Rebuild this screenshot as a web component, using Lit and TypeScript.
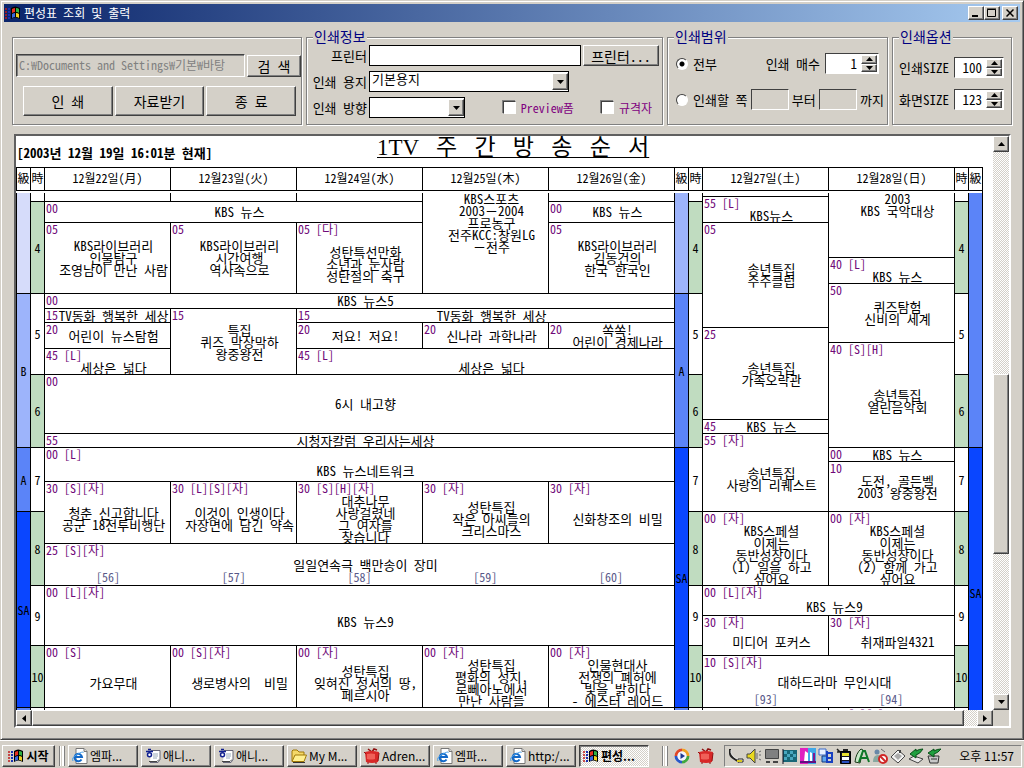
import { LitElement, html, css, svg, nothing } from "lit";
import { customElement, property } from "lit/decorators.js";
import { classMap } from "lit/directives/class-map.js";

interface Slot {
  from: number;
  to: number;
  col: number;
  span: number;
  kind: string;
  tag?: string;
  lines?: string[];
  episodes?: string[];
}

const slot = (from: number, to: number, col: number, span: number, tag: string, text: string, episodes?: string[]): Slot => ({
  from, to, col, span, kind: "show", tag, lines: text ? text.split("|") : [], episodes,
});
const band = (from: number, to: number, col: number, kind: string, text = ""): Slot => ({
  from, to, col, span: 1, kind, lines: text ? [text] : [],
});

// Slot boundaries down the sheet, in sheet units.
const MARKS = [0, 3, 8, 29, 64, 90, 100, 115, 129, 134, 149, 155, 181, 226, 240, 254, 268, 288, 318, 350, 392, 422, 452, 462, 514, 544];

const hours = (col: number): Slot[] => [
  band(0, 8, col, "hour"),
  band(8, 100, col, "hour even", "4"),
  band(100, 181, col, "hour", "5"),
  band(181, 254, col, "hour even", "6"),
  band(254, 318, col, "hour", "7"),
  band(318, 392, col, "hour even", "8"),
  band(392, 452, col, "hour", "9"),
  band(452, 514, col, "hour even", "10"),
  band(514, 544, col, "hour"),
];

const SLOTS: Slot[] = [
  band(0, 100, 0, "grade c"),
  band(100, 254, 0, "grade b", "B"),
  band(254, 318, 0, "grade a", "A"),
  band(318, 514, 0, "grade sa", "SA"),
  band(514, 544, 0, "grade a"),
  ...hours(1),

  slot(0, 8, 2, 1, "", ""),
  slot(0, 8, 3, 1, "", ""),
  slot(0, 8, 4, 1, "", ""),
  { ...slot(0, 100, 5, 1, "", "KBS스포츠|2003－2004|프로농구|전주KCC:창원LG|－전주"), kind: "show top" },
  slot(0, 8, 6, 1, "", ""),
  slot(8, 29, 2, 3, "00", "KBS 뉴스"),
  slot(8, 29, 6, 1, "00", "KBS 뉴스"),
  slot(29, 100, 2, 1, "05", "KBS라이브러리|인물탐구|조영남이 만난 사람"),
  slot(29, 100, 3, 1, "05", "KBS라이브러리|시간여행|역사속으로"),
  slot(29, 100, 4, 1, "05 [다]", "성탄특선만화|소년과 눈사람|성탄절의 축구"),
  slot(29, 100, 6, 1, "05", "KBS라이브러리|김동건의|한국 한국인"),
  slot(100, 115, 2, 5, "00", "KBS 뉴스5"),
  slot(115, 129, 2, 1, "15", "TV동화 행복한 세상"),
  slot(115, 181, 3, 1, "15", "특집|퀴즈 막상막하|왕중왕전"),
  slot(115, 129, 4, 3, "15", "TV동화 행복한 세상"),
  slot(129, 155, 2, 1, "20", "어린이 뉴스탐험"),
  slot(129, 155, 4, 1, "20", "저요! 저요!"),
  slot(129, 155, 5, 1, "20", "신나라 과학나라"),
  slot(129, 155, 6, 1, "20", "쏙쏙!|어린이 경제나라"),
  slot(155, 181, 2, 1, "45 [L]", "세상은 넓다"),
  slot(155, 181, 4, 3, "45 [L]", "세상은 넓다"),
  slot(181, 240, 2, 5, "00", "6시 내고향"),
  slot(240, 254, 2, 5, "55", "시청자칼럼 우리사는세상"),
  slot(254, 288, 2, 5, "00 [L]", "KBS 뉴스네트워크"),
  slot(288, 350, 2, 1, "30 [S][자]", "청춘 신고합니다|공군 18전투비행단"),
  slot(288, 350, 3, 1, "30 [L][S][자]", "이것이 인생이다|자장면에 담긴 약속"),
  slot(288, 350, 4, 1, "30 [S][H][자]", "대추나무|사랑걸렸네|그 여자를|찾습니다"),
  slot(288, 350, 5, 1, "30 [자]", "성탄특집|작은 아씨들의|크리스마스"),
  slot(288, 350, 6, 1, "30 [자]", "신화창조의 비밀"),
  slot(350, 392, 2, 5, "25 [S][자]", "일일연속극 백만송이 장미", ["[56]", "[57]", "[58]", "[59]", "[60]"]),
  slot(392, 452, 2, 5, "00 [L][자]", "KBS 뉴스9"),
  slot(452, 514, 2, 1, "00 [S]", "가요무대"),
  slot(452, 514, 3, 1, "00 [S][자]", "생로병사의  비밀"),
  slot(452, 514, 4, 1, "00 [자]", "성탄특집|잊혀진 성서의 땅,|페르시아"),
  slot(452, 514, 5, 1, "00 [자]", "성탄특집|평화의 성지,|로뻬아노에서|만난 사람들"),
  slot(452, 514, 6, 1, "00 [자]", "인물현대사|전쟁의 폐허에|빛을 밝히다|- 에스터 레어드"),
  slot(514, 544, 2, 5, "00", ""),

  band(0, 100, 7, "grade b"),
  band(100, 254, 7, "grade a", "A"),
  band(254, 514, 7, "grade sa", "SA"),
  band(514, 544, 7, "grade a"),
  ...hours(8),

  slot(0, 3, 9, 1, "", ""),
  slot(3, 29, 9, 1, "55 [L]", "KBS뉴스"),
  slot(29, 134, 9, 1, "05", "송년특집|주주클럽"),
  slot(134, 226, 9, 1, "25", "송년특집|가족오락관"),
  slot(226, 240, 9, 1, "45", "KBS 뉴스"),
  slot(240, 318, 9, 1, "55 [자]", "송년특집|사랑의 리퀘스트"),
  slot(318, 392, 9, 1, "00 [자]", "KBS스페셜|이제는|동반성장이다|(1) 일을 하고|싶어요"),
  { ...slot(0, 64, 10, 1, "", "2003|KBS 국악대상"), kind: "show top" },
  slot(64, 90, 10, 1, "40 [L]", "KBS 뉴스"),
  slot(90, 149, 10, 1, "50", "퀴즈탐험|신비의 세계"),
  slot(149, 254, 10, 1, "40 [S][H]", "송년특집|열린음악회"),
  slot(254, 268, 10, 1, "00", "KBS 뉴스"),
  slot(268, 318, 10, 1, "10", "도전, 골든벨|2003 왕중왕전"),
  slot(318, 392, 10, 1, "00 [자]", "KBS스페셜|이제는|동반성장이다|(2) 함께 가고|싶어요"),
  slot(392, 422, 9, 2, "00 [L][자]", "KBS 뉴스9"),
  slot(422, 462, 9, 1, "30 [자]", "미디어 포커스"),
  slot(422, 462, 10, 1, "30 [자]", "취재파일4321"),
  slot(462, 514, 9, 2, "10 [S][자]", "대하드라마 무인시대", ["[93]", "[94]"]),
  slot(514, 544, 9, 1, "00", ""),
  slot(514, 544, 10, 1, "00 [S][H]", ""),
  ...hours(11),
  band(0, 254, 12, "grade a"),
  band(254, 544, 12, "grade sa", "SA"),
];

const HEADS = ["級", "時", "12월22일(月)", "12월23일(火)", "12월24일(水)", "12월25일(木)", "12월26일(金)", "級", "時", "12월27일(土)", "12월28일(日)", "時", "級"];

const windowsLogo = svg`
  <path d="M0 4h2M0 7h2M0 10h2M0 13h2" stroke="#c01818" stroke-width="1.5"/>
  <path d="M3 4h2M3 7h2M3 10h2M3 13h2" stroke="#1830b0" stroke-width="2"/>
  <path d="M6 3q4-3 9 0v11q-5-3-9 0z" fill="#000"/>
  <path d="M7 4q2-1 3-1v4q-1 0-3 1z" fill="#e83020"/>
  <path d="M11 3q2 0 3 1v4q-1-1-3-1z" fill="#30b040"/>
  <path d="M7 9q2-1 3-1v4q-1 0-3 1z" fill="#3868e0"/>
  <path d="M11 8q2 0 3 1v4q-1-1-3-1z" fill="#f0d020"/>`;

const ICONS: Record<string, unknown> = {
  windows: windowsLogo,
  ie: svg`
    <path d="M4 .5h8l3 3v12H4z" fill="#fff" stroke="#777"/>
    <path d="M12 .5v3h3" fill="#ddd" stroke="#777"/>
    <path d="M9.500 11.500A3.700 3.700 0 1 1 10 9H3" fill="none" stroke="#1268c8" stroke-width="2"/>
    <path d="M1 13Q-1 10 5 6.500T11.500 4.500" fill="none" stroke="#48a0e8"/>`,
  hangul: svg`
    <path d="M6 2.500h9v9l-2 3H5" fill="#fff" stroke="#667"/>
    <path d="M8 6h5M8 8h5M8 10h4" stroke="#9ab"/>
    <path d="M3 1.500h3M1 3.500h7" stroke="#102090" stroke-width="1.500"/>
    <circle cx="4.500" cy="6.800" r="2" fill="#fff" stroke="#102090" stroke-width="1.500"/>
    <path d="M4 13.500h8l2-2" fill="none" stroke="#444"/>`,
  folder: svg`
    <path d="M1 13V3l1-1h4l2 2h5v3" fill="#f4d868" stroke="#a07808"/>
    <path d="M1 13.500L4 7h11.500L13 13.500z" fill="#fff090" stroke="#a07808"/>
    <path d="M2 14.500h12" stroke="#333"/>`,
  tv: svg`
    <path d="M4 1l4 3 2-3 3 1" fill="none" stroke="#901010" stroke-width="1.500"/>
    <path d="M1 4q7-2 14 0l-1 10q-6 2-12 0z" fill="#d82828"/>
    <path d="M3 6q4-1 8 0v5q-4 1-8 0z" fill="#f06058"/>
    <path d="M0 4l2 2M15 5l-1 8M3 15h2M11 15h2" stroke="#901010"/>`,
  player: svg`
    <circle cx="8" cy="8" r="7.500" fill="#e8e8f0"/>
    <path d="M8 2a6 6 0 0 1 6 6" fill="none" stroke="#f0a020" stroke-width="3"/>
    <path d="M14 8a6 6 0 0 1-6 6" fill="none" stroke="#40a840" stroke-width="3"/>
    <path d="M8 14a6 6 0 0 1-6-6" fill="none" stroke="#2858c8" stroke-width="3"/>
    <path d="M2 8a6 6 0 0 1 6-6" fill="none" stroke="#e04828" stroke-width="3"/>
    <circle cx="8" cy="8" r="4.500" fill="#f4f6ff"/>
    <path d="M6.500 5v6L11 8z" fill="#203890"/>`,
  phone: svg`
    <path d="M2 1v4q0 3 3 5l6 4" fill="none" stroke="#222" stroke-width="2"/>
    <path d="M3 2v3l3 4 5 3" fill="none" stroke="#ddd"/>
    <path d="M10 11h5v3h-5z" fill="#fff" stroke="#222"/>
    <path d="M9 13h5" stroke="#d8c820" stroke-width="2"/>`,
  speaker: svg`
    <path d="M1 6h3l5-5v14L4 10H1z" fill="#e8d820" stroke="#444"/>
    <path d="M11 5v6M13 7h2M13 4l2-1M13 11l2 1" stroke="#666"/>`,
  monitor: svg`
    <path d="M1.500 1.500h13v9h-13z" fill="#808080" stroke="#444"/>
    <path d="M2 14h4M9 14h5" stroke="#444" stroke-width="2"/>`,
  checker: svg`
    <path d="M1 2h14v12H1z" fill="#186878"/>
    <path d="M2 3h3v3H2zM8 3h3v3H8zM5 6h3v3H5zM11 6h3v3h-3zM2 9h3v3H2zM8 9h3v3H8z" fill="#48a8c0"/>
    <path d="M1 1v15" stroke="#112"/>`,
  messenger: svg`
    <path d="M0 0h8v16H0z" fill="#e020c0"/>
    <path d="M8 0h8v16H8z" fill="#40a8e8"/>
    <path d="M5 3l3 2v9H4z" fill="#fff"/>
    <path d="M10 4l2 1v9h-2z" fill="#fff"/>
    <path d="M14 5v9" stroke="#801890" stroke-width="2"/>
    <path d="M0 14h16" stroke="#601080" stroke-width="2"/>`,
  bluetool: svg`
    <path d="M1 1h7v6H1z" fill="#e8f0ff" stroke="#3868c8"/>
    <path d="M4 8h5v6H4z" fill="#60a8f0" stroke="#103880"/>
    <path d="M9 3v11h5v-4H9M14 9V5H9" fill="none" stroke="#1840c0" stroke-width="2"/>`,
  battery: svg`
    <path d="M1 1l3 3M1 4h4" stroke="#222" stroke-width="1.500"/>
    <path d="M4.500 3.500h10v12h-10z" fill="#112" stroke="#000"/>
    <path d="M6 5h7v3H6z" fill="#e8e030"/>
    <path d="M6 9h7v3H6z" fill="#fff"/>
    <path d="M6 13h7v2H6z" fill="#2850c0"/>
    <path d="M7 2h5" stroke="#222" stroke-width="2"/>`,
  letter: svg`
    <path d="M1 14Q2 5 7 1l2 1-3 13z" fill="#c8e8c8" stroke="#183818"/>
    <path d="M5 14L9 3h2l4 11M7 10h6" fill="none" stroke="#107828" stroke-width="2"/>`,
  blocked: svg`
    <circle cx="5" cy="4" r="2.500" fill="#6888a8"/>
    <path d="M1 14q0-7 5-7t4 7z" fill="#88a8a0"/>
    <circle cx="11" cy="11" r="4" fill="#fff" stroke="#d02828" stroke-width="2"/>
    <path d="M8 8l6 6" stroke="#d02828" stroke-width="2"/>
    <path d="M9 1l4 3" stroke="#666"/>`,
  house: svg`
    <path d="M1 9l7-7 7 6-7 7z" fill="#f4f4f4" stroke="#444"/>
    <path d="M4 8l4-3 4 3-4 4z" fill="#aaa"/>
    <path d="M10 2v3" stroke="#444" stroke-width="2"/>`,
  eject: svg`
    <path d="M1 11l5-3 9 3-5 4z" fill="#e8e8e8" stroke="#444"/>
    <path d="M15 1Q11 1 8 3V1L2 6l6 4V7q4-1 7-6z" fill="#20a040" stroke="#085018"/>`,
  drive: svg`
    <path d="M2 8h11l-1 7H4z" fill="#c8c8c8" stroke="#333"/>
    <path d="M5 11h6" stroke="#333"/>
    <path d="M15 1Q11 1 8 3V1L2 5l6 4V6q4-1 7-5z" fill="#20a040" stroke="#085018"/>`,
};

const icon = (name: string) => html`<svg class="icon" viewBox="0 0 16 16" width="16" height="16" aria-hidden="true">${ICONS[name]}</svg>`;
const arrow = (dir: string) => {
  const shapes: Record<string, string> = {
    up: "M0 4h7L3.500 0z",
    down: "M0 0h7L3.500 4z",
    left: "M4 0v7L0 3.500z",
    right: "M0 0v7L4 3.500z",
  };
  const tall = dir === "left" || dir === "right";
  return html`<svg width=${tall ? 4 : 7} height=${tall ? 7 : 4} aria-hidden="true"><path d=${shapes[dir]} /></svg>`;
};

const base = css`
  * { box-sizing: border-box; }
  button, input, select {
    font: inherit;
    color: #000;
    margin: 0;
    padding: 0;
    border-radius: 0;
  }
  svg { display: block; flex: none; }
  .raised {
    display: flex;
    align-items: center;
    justify-content: center;
    background: #d4d0c8;
    border: 1px solid;
    border-color: #fff #404040 #404040 #fff;
    box-shadow: inset -1px -1px #808080;
    white-space: pre;
  }
`;

@customElement("week-sheet")
export class WeekSheet extends LitElement {
  static styles = [base, css`
    :host {
      display: block;
      overflow: hidden;
      background: #fff;
      min-width: 0;
    }
    .page { padding-right: 10px; }
    .heading {
      display: grid;
      grid-template-columns: 28fr 47fr;
      height: 31px;
    }
    .stamp {
      margin: 0;
      padding: 10px 0 0 1px;
      font-size: 13px;
      line-height: 14px;
      font-weight: 700;
      white-space: nowrap;
    }
    .title {
      margin: 0;
      font: 400 23px/24px "Liberation Serif", "Noto Sans CJK KR", serif;
      text-decoration: underline;
      text-decoration-thickness: 1px;
      text-underline-offset: 2px;
      white-space: pre;
    }
    table {
      width: 100%;
      table-layout: fixed;
      border-collapse: separate;
      border-spacing: 0;
      border-right: 1px solid #000;
    }
    .narrow { width: 14px; }
    th, td {
      padding: 0;
      text-align: center;
      font-weight: 400;
      border-left: 1px solid #000;
      border-top: 1px solid #000;
      line-height: 12px;
      white-space: pre;
    }
    th {
      height: 24px;
      padding-bottom: 2px;
      border-bottom: 1px solid #000;
    }
    .gap td {
      height: 2px;
      border: 0;
      line-height: 0;
      background: #fff;
    }
    td { position: relative; vertical-align: middle; }
    .first td { border-top: 0; }
    .show { padding-left: 12px; font-size: 13px; }
    .tagged { padding-top: 12px; }
    .serial { padding-bottom: 12px; }
    .top { vertical-align: top; }
    .even { background: #c0dcc0; }
    .c { background: #d6dcfa; }
    .b { background: #9db4fb; }
    .a { background: #5b84f8; }
    .sa { background: #0a46ff; }
    .tag {
      position: absolute;
      left: 1px;
      top: 0;
      color: #700878;
      font-size: 12px;
    }
    .episodes {
      position: absolute;
      left: 0;
      right: 0;
      bottom: 2px;
      display: grid;
      grid-auto-flow: column;
      grid-auto-columns: 1fr;
      font-size: 12px;
      color: #585888;
    }
  `];

  private cell(s: Slot) {
    const kinds = Object.fromEntries(s.kind.split(" ").map((k) => [k, true]));
    return html`<td
      class=${classMap({ ...kinds, tagged: !!s.tag && s.tag.includes("["), serial: !!s.episodes })}
      colspan=${s.span}
      rowspan=${MARKS.indexOf(s.to) - MARKS.indexOf(s.from)}
    >${s.tag ? html`<span class="tag">${s.tag}</span>` : nothing}${(s.lines ?? []).map((l) => html`<div>${l}</div>`)}${s.episodes
        ? html`<div class="episodes">${s.episodes.map((e) => html`<span>${e}</span>`)}</div>`
        : nothing}</td>`;
  }

  render() {
    return html`<div class="page">
      <header class="heading">
        <p class="stamp">[2003년 12월 19일 16:01분 현재]</p>
        <h1 class="title">1TV   주   간   방   송   순   서</h1>
      </header>
      <table>
        <colgroup>${HEADS.map((h) => html`<col class=${h.length === 1 ? "narrow" : "day"} />`)}</colgroup>
        <thead>
          <tr>${HEADS.map((h) => html`<th scope="col">${h}</th>`)}</tr>
          <tr class="gap"><td colspan="13"></td></tr>
        </thead>
        <tbody>
          ${MARKS.slice(0, -1).map((m, i) => html`<tr class=${i === 0 ? "first" : "row"} style="height:${MARKS[i + 1] - m}px">${SLOTS.filter((s) => s.from === m)
            .sort((x, y) => x.col - y.col)
            .map((s) => this.cell(s))}</tr>`)}
        </tbody>
      </table>
    </div>`;
  }
}

@customElement("spin-box")
export class SpinBox extends LitElement {
  @property() value = "";
  @property() label = "";

  static styles = [base, css`
    :host { display: inline-block; }
    .spin {
      display: flex;
      height: 21px;
      padding: 1px;
      background: #fff;
      border: 1px solid;
      border-color: #404040 #fff #fff #404040;
    }
    input {
      flex: 1;
      width: 0;
      border: 0;
      background: none;
      outline: 0;
      text-align: right;
      padding-right: 4px;
    }
    .steps {
      display: grid;
      grid-template-rows: 1fr 1fr;
      width: 16px;
    }
    .steps button { min-height: 0; overflow: hidden; }
  `];

  render() {
    return html`<div class="spin">
      <input type="text" inputmode="numeric" aria-label=${this.label} .value=${this.value} />
      <span class="steps">
        <button class="raised" aria-label="증가">${arrow("up")}</button>
        <button class="raised" aria-label="감소">${arrow("down")}</button>
      </span>
    </div>`;
  }
}

@customElement("app-root")
export class AppRoot extends LitElement {
  static styles = [base, css`
    :host {
      display: flex;
      flex-direction: column;
      height: 100vh;
      overflow: hidden;
      background: #d4d0c8;
      color: #000;
      font: 12px/14px "Noto Sans Mono CJK KR", "Noto Sans CJK KR", sans-serif;
    }
    .window {
      flex: 1;
      min-height: 0;
      display: flex;
      flex-direction: column;
      padding: 2px;
      border: 1px solid;
      border-color: #d4d0c8 #404040 #404040 #d4d0c8;
      box-shadow: inset 1px 1px #fff, inset -1px -1px #808080;
    }
    .titlebar {
      display: flex;
      align-items: center;
      gap: 3px;
      height: 18px;
      margin: 1px;
      padding: 0 2px 0 1px;
      background: linear-gradient(90deg, #0a246a, #a6caf0);
      color: #fff;
    }
    .titlebar h1 {
      flex: 1;
      margin: 0;
      font-size: 12px;
      line-height: 16px;
      font-weight: 400;
    }
    .controls { display: flex; }
    .controls button { width: 16px; height: 14px; }
    .controls .close { margin-left: 2px; }

    .groups {
      display: grid;
      grid-template-columns: 291fr 358fr 222fr 121fr;
      gap: 3px;
      margin: 5px 8px 0 9px;
      font-size: 13px;
    }
    fieldset {
      position: relative;
      min-width: 0;
      height: 98px;
      margin: 0;
      padding: 0;
      border: 0;
    }
    fieldset::before {
      content: "";
      position: absolute;
      inset: 9px 1px 1px 0;
      border: 1px solid #808080;
      box-shadow: 1px 1px #fff, inset 1px 1px #fff;
    }
    legend {
      position: relative;
      float: left;
      width: auto;
      margin-left: 7px;
      padding: 0 1px;
      background: #d4d0c8;
      color: #000080;
      font-size: 14px;
      line-height: 17px;
    }
    .body {
      position: relative;
      clear: both;
      display: flex;
      flex-direction: column;
    }
    .line {
      display: flex;
      align-items: center;
      white-space: nowrap;
    }
    .files { padding: 26px 2px 0 4px; gap: 9px; }
    .files .line { gap: 2px; }
    .path {
      flex: 1;
      min-width: 0;
      height: 23px;
      padding: 0 2px 3px;
      background: #d4d0c8;
      border: 1px solid;
      border-color: #404040 #fff #fff #404040;
      box-shadow: inset 1px 1px #808080;
      font-size: 12px;
    }
    .path:disabled { color: #808080; }
    .search { width: 54px; height: 22px; font-size: 14px; }
    .actions { padding: 0 5px 0 7px; }
    .actions button { flex: 1; height: 30px; font-size: 14px; }

    .printer { gap: 5px; padding: 0 5px 0 3px; }
    .printer .line { height: 21px; }
    .cap { width: 58px; margin-right: 2px; text-align: right; }
    .printer .text {
      flex: 1;
      min-width: 0;
      height: 21px;
      background: #fff;
      border: 1px solid #000;
    }
    .printer .more { width: 76px; height: 21px; margin-left: 2px; font-size: 14px; }
    .combo { position: relative; display: block; }
    .combo select {
      appearance: none;
      width: 100%;
      height: 21px;
      padding: 0 18px 5px 2px;
      background: #fff;
      border: 1px solid #000;
      display: block;
      line-height: 14px;
    }
    .combo .raised {
      position: absolute;
      right: 1px;
      top: 2px;
      width: 16px;
      height: 17px;
      pointer-events: none;
    }
    .paper { width: 200px; }
    .way { width: 96px; }
    .check {
      display: flex;
      align-items: center;
      gap: 5px;
      color: #800080;
      font-size: 12px;
    }
    .check input {
      appearance: none;
      width: 13px;
      height: 13px;
      background: #fff;
      border: 1px solid;
      border-color: #404040 #fff #fff #404040;
      box-shadow: -1px -1px #808080;
    }
    .spread { flex: 1; display: flex; justify-content: flex-end; gap: 27px; padding-right: 7px; }

    .range { gap: 15px; padding: 8px 5px 0 9px; }
    .range .line { height: 21px; justify-content: space-between; }
    .radio { display: flex; align-items: center; gap: 5px; }
    .radio input {
      appearance: none;
      width: 12px;
      height: 12px;
      border-radius: 50%;
      border: 1px solid;
      border-color: #404040 #fff #fff #404040;
      background: #fff;
    }
    .radio input:checked { background: radial-gradient(circle, #000 2px, #fff 3px); }
    .copies { display: flex; align-items: center; gap: 5px; padding-right: 5px; }
    .copies spin-box { width: 54px; }
    .pages { width: 38px; height: 21px; background: #d4d0c8; border: 1px solid; border-color: #404040 #fff #fff #404040; }

    .option { gap: 11px; padding: 12px 9px 0 7px; }
    .option .line { justify-content: space-between; }
    .option spin-box { width: 50px; }

    .viewer {
      flex: 1;
      min-height: 0;
      display: grid;
      grid-template-columns: minmax(0, 1fr) 16px;
      grid-template-rows: minmax(0, 1fr) 16px;
      margin: 8px 10px 9px 11px;
      border: 2px solid;
      border-color: #606060 #fff #fff #606060;
    }
    .vbar, .hbar {
      display: flex;
      background: conic-gradient(#fff 25%, #d4d0c8 0 50%, #fff 0 75%, #d4d0c8 0) 0 0 / 2px 2px;
    }
    .vbar { flex-direction: column; }
    .vbar .end { height: 16px; }
    .hbar .end { width: 16px; }
    .before { flex: 223; }
    .vthumb { flex: 178; }
    .after { flex: 141; }
    .hthumb { flex: 932; }
    .rest { flex: 13; }

    .taskbar {
      display: flex;
      align-items: center;
      height: 28px;
      gap: 3px;
      padding: 2px 2px 0;
      border-top: 1px solid #fff;
      font-family: "Noto Sans CJK KR", sans-serif;
    }
    .taskbar .raised { height: 22px; }
    .start { width: 53px; gap: 2px; font-weight: 700; }
    .grip {
      width: 5px;
      height: 20px;
      margin: 0 1px;
      border-left: 1px solid #808080;
      border-right: 2px solid #fff;
      box-shadow: 1px 0 #808080, inset 1px 0 #fff;
    }
    .tasks { display: flex; flex: 1; gap: 3px; min-width: 0; }
    .tasks .raised {
      flex: 0 1 70px;
      min-width: 0;
      justify-content: flex-start;
      gap: 2px;
      padding-left: 3px;
      overflow: hidden;
    }
    .tasks .active {
      border-color: #404040 #fff #fff #404040;
      box-shadow: inset 1px 1px #808080;
      background: conic-gradient(#fff 25%, #d4d0c8 0 50%, #fff 0 75%, #d4d0c8 0) 0 0 / 2px 2px;
      font-weight: 700;
    }
    .quick { display: flex; gap: 8px; padding: 0 7px 0 3px; }
    .tray {
      display: flex;
      align-items: center;
      gap: 2px;
      height: 22px;
      padding: 0 7px 0 3px;
      border: 1px solid;
      border-color: #808080 #fff #fff #808080;
      white-space: nowrap;
    }
    .tray time { margin-left: 15px; }
  `];

  render() {
    const tasks = [
      ["ie", "엠파..."], ["hangul", "애니..."], ["hangul", "애니..."], ["folder", "My M..."],
      ["tv", "Adren..."], ["ie", "엠파..."], ["ie", "http:/..."], ["windows", "편성..."],
    ];
    const tray = ["phone", "speaker", "monitor", "checker", "messenger", "bluetool", "battery", "letter", "blocked", "house", "eject", "drive"];
    return html`
      <div class="window">
        <header class="titlebar">
          ${icon("windows")}
          <h1>편성표 조회 및 출력</h1>
          <span class="controls">
            <button class="raised" aria-label="최소화"><svg width="10" height="10"><path d="M1 8h6" stroke="#000" stroke-width="2" /></svg></button>
            <button class="raised" aria-label="최대화"><svg width="10" height="10"><path d="M.5 1.500h8v7h-8zM0 1h9" fill="none" stroke="#000" /></svg></button>
            <button class="raised close" aria-label="닫기"><svg width="8" height="8"><path d="M.5.5l7 7M7.500.5l-7 7" stroke="#000" stroke-width="1.500" /></svg></button>
          </span>
        </header>

        <div class="groups">
          <fieldset>
            <div class="body files">
              <div class="line">
                <input class="path" aria-label="경로" disabled .value=${"C:₩Documents and Settings₩기본₩바탕"} />
                <button class="raised search">검 색</button>
              </div>
              <div class="line actions">
                <button class="raised">인 쇄</button>
                <button class="raised">자료받기</button>
                <button class="raised">종 료</button>
              </div>
            </div>
          </fieldset>

          <fieldset>
            <legend>인쇄정보</legend>
            <div class="body printer">
              <div class="line">
                <label class="cap" for="printer">프린터</label>
                <input class="text" id="printer" type="text" />
                <button class="raised more">프린터...</button>
              </div>
              <div class="line">
                <label class="cap" for="paper">인쇄 용지</label>
                <span class="combo paper"><select id="paper"><option>기본용지</option></select><span class="raised">${arrow("down")}</span></span>
              </div>
              <div class="line">
                <label class="cap" for="way">인쇄 방향</label>
                <span class="combo way"><select id="way"><option></option></select><span class="raised">${arrow("down")}</span></span>
                <span class="spread">
                  <label class="check"><input type="checkbox" />Preview폼</label>
                  <label class="check"><input type="checkbox" />규격자</label>
                </span>
              </div>
            </div>
          </fieldset>

          <fieldset>
            <legend>인쇄범위</legend>
            <div class="body range">
              <div class="line">
                <label class="radio"><input type="radio" name="range" checked />전부</label>
                <span class="copies">인쇄 매수<spin-box value="1" label="인쇄 매수"></spin-box></span>
              </div>
              <div class="line">
                <label class="radio"><input type="radio" name="range" />인쇄할 쪽</label>
                <input class="pages" id="from" type="text" disabled />
                <label for="from">부터</label>
                <input class="pages" id="to" type="text" disabled />
                <label for="to">까지</label>
              </div>
            </div>
          </fieldset>

          <fieldset>
            <legend>인쇄옵션</legend>
            <div class="body option">
              <div class="line">인쇄SIZE<spin-box value="100" label="인쇄SIZE"></spin-box></div>
              <div class="line">화면SIZE<spin-box value="123" label="화면SIZE"></spin-box></div>
            </div>
          </fieldset>
        </div>

        <main class="viewer">
          <week-sheet></week-sheet>
          <div class="vbar">
            <button class="raised end" aria-label="위로">${arrow("up")}</button>
            <span class="before"></span><span class="raised vthumb"></span><span class="after"></span>
            <button class="raised end" aria-label="아래로">${arrow("down")}</button>
          </div>
          <div class="hbar">
            <button class="raised end" aria-label="왼쪽">${arrow("left")}</button>
            <span class="raised hthumb"></span><span class="rest"></span>
            <button class="raised end" aria-label="오른쪽">${arrow("right")}</button>
          </div>
        </main>
      </div>

      <footer class="taskbar">
        <button class="raised start">${icon("windows")}시작</button>
        <span class="grip"></span>
        <nav class="tasks">
          ${tasks.map(([name, text], i) => html`<button class=${classMap({ raised: true, active: i === 7 })}>${icon(name)}${text}</button>`)}
        </nav>
        <span class="grip"></span>
        <span class="quick">${icon("player")}${icon("tv")}</span>
        <span class="tray">${tray.map(icon)}<time>오후 11:57</time></span>
      </footer>
    `;
  }
}
